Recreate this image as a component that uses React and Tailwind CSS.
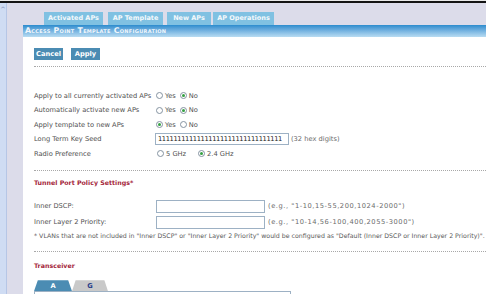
import React from 'react';

const font = { fontFamily: '"DejaVu Sans", Tahoma, sans-serif' };

function Radio({ checked }) {
  return (
    <span className="inline-flex items-center justify-center w-[7px] h-[7px] rounded-full border border-[#8593a1] bg-white mr-[2px]">
      {checked && <span className="w-[3px] h-[3px] rounded-full bg-[#34a042]" />}
    </span>
  );
}

function YesNo({ yes }) {
  return (
    <div className="flex items-center">
      <Radio checked={yes} />
      <span className="mr-[4px]">Yes</span>
      <Radio checked={!yes} />
      <span>No</span>
    </div>
  );
}

const tabs = [
  { label: 'Activated APs', w: 'w-[59px]', ml: 'ml-0' },
  { label: 'AP Template', w: 'w-[55px]', ml: 'ml-[5px]' },
  { label: 'New APs', w: 'w-[44px]', ml: 'ml-[4px]' },
  { label: 'AP Operations', w: 'w-[61px]', ml: 'ml-[2px]' },
];

export default function App() {
  return (
    <div className="w-[486px] h-[294px] overflow-hidden bg-[#dcdcea] flex flex-col text-[6.7px] text-[#505050]" style={font}>
      <div className="h-[1px] bg-[#e8e8e8]" />
      <div className="h-[2px] bg-[#141414]" />
      <div className="flex flex-1 min-h-0">
        {/* scrollbar strip */}
        <div className="w-[7px] bg-[#cfdcf3] border-r border-[#b6c6e6] flex flex-col items-center pt-[3px]">
          <span className="text-[6px] leading-none text-[#5a6f9a]">^</span>
        </div>
        <div className="flex-1 flex flex-col pl-[16px] min-w-0">
          <div className="flex pl-[21px] pt-[9px] h-[22px]">
            {tabs.map(t => (
              <div key={t.label} className={`${t.w} ${t.ml} h-[13px] bg-[#80c1e2] text-[#f4f9fc] font-bold flex items-center justify-center text-[6.5px]`}>
                {t.label}
              </div>
            ))}
          </div>
          <div className="h-[13px] bg-gradient-to-b from-[#2a8cce] to-[#b8dcf2] text-[#f0f6fb] font-bold flex items-center pl-[2px] text-[7.8px] tracking-[0.3px] [font-variant:small-caps]">
            Access Point Template Configuration
          </div>
          <div className="flex-1 bg-white pl-[11px] flex flex-col">
            <div className="flex mt-[11px] h-[12px]">
              <div className="w-[29px] bg-[#4b8cb3] text-white font-bold flex items-center justify-center">Cancel</div>
              <div className="w-[29px] ml-[8px] bg-[#4b8cb3] text-white font-bold flex items-center justify-center">Apply</div>
            </div>
            <div className="mt-[6px] border-t border-dotted border-[#a8a8a8]" />
            <div className="mt-[22px] flex flex-col">
              <div className="h-[14.5px] flex items-center">
                <div className="w-[122px]">Apply to all currently activated APs</div>
                <YesNo yes={false} />
              </div>
              <div className="h-[14.5px] flex items-center">
                <div className="w-[122px]">Automatically activate new APs</div>
                <YesNo yes={false} />
              </div>
              <div className="h-[14.5px] flex items-center">
                <div className="w-[122px]">Apply template to new APs</div>
                <YesNo yes={true} />
              </div>
              <div className="h-[14.5px] flex items-center">
                <div className="w-[121px]">Long Term Key Seed</div>
                <div className="w-[134px] h-[12px] border border-[#9db1c4] flex items-center pl-[2px] text-[#222] tracking-[-0.38px]">11111111111111111111111111111111</div>
                <span className="ml-[2px] text-[#6a6a6a]">(32 hex digits)</span>
              </div>
              <div className="h-[14.5px] flex items-center">
                <div className="w-[123px]">Radio Preference</div>
                <Radio checked={false} />
                <span className="mr-[12px]">5 GHz</span>
                <Radio checked={true} />
                <span>2.4 GHz</span>
              </div>
            </div>
            <div className="mt-[9px] border-t border-dotted border-[#a8a8a8]" />
            <div className="mt-[6px] h-[12px] flex items-center text-[#a41f3b] font-bold text-[6.3px]">Tunnel Port Policy Settings*</div>
            <div className="mt-[9px] h-[16px] flex items-center">
              <div className="w-[122px]">Inner DSCP:</div>
              <div className="w-[109px] h-[13px] border border-[#9db1c4]" />
              <span className="ml-[3px] text-[#6a6a6a] tracking-[0.55px]">(e.g., "1-10,15-55,200,1024-2000")</span>
            </div>
            <div className="h-[16px] flex items-center">
              <div className="w-[122px]">Inner Layer 2 Priority:</div>
              <div className="w-[109px] h-[13px] border border-[#9db1c4]" />
              <span className="ml-[3px] text-[#6a6a6a] tracking-[0.55px]">(e.g., "10-14,56-100,400,2055-3000")</span>
            </div>
            <div className="h-[10px] flex items-center text-[#5a5a5a] whitespace-nowrap text-[6.25px]">
              * VLANs that are not included in "Inner DSCP" or "Inner Layer 2 Priority" would be configured as "Default (Inner DSCP or Inner Layer 2 Priority)".
            </div>
            <div className="mt-[11px] border-t border-dotted border-[#a8a8a8]" />
            <div className="mt-[8px] h-[12px] flex items-center text-[#a41f3b] font-bold text-[6.3px]">Transceiver</div>
            <div className="mt-[8px] flex h-[11px] items-end">
              <div className="w-[38px] h-[11px] bg-[#4b8cb3] text-white font-bold flex items-center justify-center [clip-path:polygon(10%_0,90%_0,100%_100%,0_100%)]">A</div>
              <div className="w-[36px] h-[11px] bg-[#c9c9c9] text-[#2a3f8a] font-bold flex items-center justify-center [clip-path:polygon(10%_0,90%_0,100%_100%,0_100%)]">G</div>
            </div>
            <div className="w-[257px] h-[10px] border border-[#9db1c4] border-b-0" />
          </div>
        </div>
      </div>
    </div>
  );
}
